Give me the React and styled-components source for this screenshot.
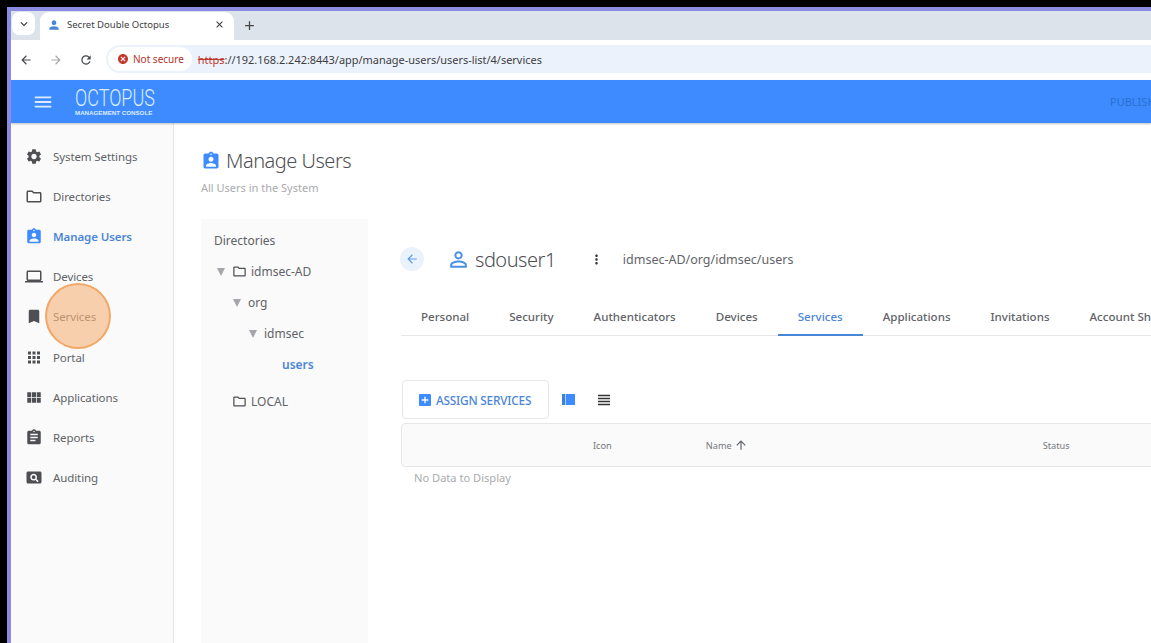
import React from "react";
import styled, { createGlobalStyle } from "styled-components";
import {
  MdSettings,
  MdOutlineFolder,
  MdAssignmentInd,
  MdOutlineLaptop,
  MdBookmark,
  MdApps,
  MdViewModule,
  MdAssignment,
  MdPageview,
  MdPersonOutline,
  MdMoreVert,
  MdArrowBack,
  MdArrowForward,
  MdArrowUpward,
  MdAddBox,
  MdCancel,
  MdRefresh,
  MdClose,
  MdAdd,
  MdKeyboardArrowDown,
  MdViewHeadline,
  MdMenu,
  MdPerson,
} from "react-icons/md";

const COLORS = {
  blue: "#3d8bff",
  link: "#4a86d8",
  text: "#5f6368",
  dark: "#4d4f53",
  muted: "#a9abae",
  panel: "#fafafa",
  line: "#e6e7e9",
};

const FONT = `"Noto Sans", "Open Sans", sans-serif`;

const GlobalStyle = createGlobalStyle`
  html, body {
    margin: 0;
    height: 100%;
    overflow: hidden;
    background: #000;
  }
  #root {
    height: 100%;
  }
  * {
    box-sizing: border-box;
  }
`;

const Screen = styled.div`
  height: 643px;
  width: 1151px;
  padding: 7px 0 0 7px;
  background: #000;
  font-family: ${FONT};
  overflow: hidden;
`;

const Frame = styled.div`
  height: 100%;
  display: flex;
  flex-direction: column;
  border-top: 4px solid #8b8be2;
  border-left: 4px solid #8b8be2;
  background: #fff;
  overflow: hidden;
`;

const TabStrip = styled.div`
  height: 29px;
  flex: none;
  display: flex;
  align-items: flex-end;
  background: #dde3ea;
  padding-left: 1px;
`;

const TabMenu = styled.div`
  width: 23px;
  height: 23px;
  margin-bottom: 5px;
  display: flex;
  align-items: center;
  justify-content: center;
  background: #fff;
  border-radius: 7px;
  color: #333;
  font-size: 14px;
`;

const BrowserTab = styled.div`
  width: 194px;
  height: 28px;
  margin-left: 5px;
  padding: 0 9px 3px 7px;
  display: flex;
  align-items: center;
  gap: 6px;
  background: #fff;
  border-radius: 9px 9px 0 0;
  color: #3c4043;
  font-size: 9.5px;
  white-space: nowrap;
`;

const TabTitle = styled.span`
  flex: 1;
`;

const NewTab = styled.div`
  margin: 0 0 7px 8px;
  display: flex;
  color: #444;
  font-size: 15px;
`;

const AddressBar = styled.div`
  height: 40px;
  flex: none;
  display: flex;
  align-items: center;
  background: #fff;
`;

const NavButton = styled.div`
  width: 30px;
  display: flex;
  justify-content: center;
  font-size: 14px;
  color: ${(p) => (p.$off ? "#a6a8ab" : "#45484c")};
`;

const Omnibox = styled.div`
  flex: 1;
  height: 28px;
  margin-left: 5px;
  margin-bottom: 2px;
  display: flex;
  align-items: center;
  background: #ecf2fb;
  border-radius: 14px 0 0 14px;
  font-size: 10.95px;
  color: #3c4043;
  white-space: nowrap;
`;

const SecureChip = styled.div`
  height: 24px;
  margin-left: 2px;
  padding: 0 8px 0 9px;
  display: flex;
  align-items: center;
  gap: 4px;
  background: #fff;
  border-radius: 12px;
  color: #b3322a;
  font-size: 10px;
`;

const Url = styled.span`
  margin-left: 6px;
`;

const Struck = styled.span`
  color: #c0392b;
  text-decoration: line-through;
`;

const Header = styled.header`
  height: 43px;
  flex: none;
  display: flex;
  align-items: center;
  background: ${COLORS.blue};
  box-shadow: 0 1px 2px rgba(0, 0, 0, 0.25);
  z-index: 2;
  color: #dcebff;
`;

const MenuButton = styled.div`
  flex: none;
  width: 64px;
  padding-left: 21px;
  display: flex;
  font-size: 22px;
`;

const Logo = styled.div`
  flex: none;
  width: 81px;
  display: flex;
  flex-direction: column;
  align-items: flex-start;
  gap: 1px;
`;

const LogoName = styled.div`
  font-family: Roboto, sans-serif;
  font-weight: 300;
  font-size: 24px;
  line-height: 20px;
  height: 20px;
  transform: scaleX(0.75);
  transform-origin: left center;
  white-space: nowrap;
`;

const LogoSub = styled.div`
  font-family: "Liberation Sans", sans-serif;
  font-weight: 700;
  font-size: 6.2px;
  line-height: 7px;
  white-space: nowrap;
`;

const Publish = styled.div`
  flex: none;
  margin-left: 954px;
  font-size: 11px;
  color: #2a6fd1;
  white-space: nowrap;
`;

const Body = styled.div`
  flex: 1;
  min-height: 0;
  display: flex;
`;

const Sidebar = styled.nav`
  width: 163px;
  flex: none;
  padding-top: 13px;
  background: ${COLORS.panel};
  border-right: 1px solid ${COLORS.line};
`;

const NavRow = styled.div`
  height: 40.2px;
  padding-left: 14px;
  display: flex;
  align-items: center;
  gap: 10px;
  font-size: 11.5px;
  letter-spacing: -0.1px;
  font-weight: ${(p) => (p.$active ? 600 : 400)};
  color: ${(p) => (p.$active ? COLORS.link : COLORS.text)};
`;

const NavIcon = styled.span`
  width: 18px;
  display: flex;
  justify-content: center;
  font-size: 19px;
  color: ${(p) => (p.$active ? COLORS.blue : COLORS.dark)};
`;

const Pulse = styled.div`
  position: absolute;
  left: 45px;
  top: 283px;
  width: 66px;
  height: 66px;
  border-radius: 50%;
  background: rgba(246, 178, 120, 0.6);
  border: 2px solid rgba(240, 160, 90, 0.85);
`;

const Main = styled.main`
  flex: 1;
  min-width: 0;
  padding: 24px 0 0 27px;
  display: flex;
  flex-direction: column;
`;

const PageTitle = styled.h1`
  margin: 0;
  display: flex;
  align-items: center;
  gap: 5px;
  font-size: 20px;
  line-height: 28px;
  font-weight: 300;
  letter-spacing: -0.5px;
  color: ${COLORS.dark};
  svg {
    color: ${COLORS.blue};
    font-size: 20px;
  }
`;

const PageSub = styled.p`
  margin: 5px 0 0 0;
  font-size: 11px;
  line-height: 15px;
  color: ${COLORS.muted};
`;

const Columns = styled.div`
  flex: 1;
  min-height: 0;
  margin-top: 24px;
  display: flex;
`;

const TreePanel = styled.aside`
  width: 167px;
  flex: none;
  padding: 12px 0 0 13px;
  background: ${COLORS.panel};
  font-size: 12px;
  color: ${COLORS.text};
`;

const TreeHead = styled.div`
  height: 20px;
  line-height: 20px;
  margin-bottom: 5px;
`;

const TreeRow = styled.div`
  height: ${(p) => p.$h || 31}px;
  padding-left: ${(p) => p.$indent}px;
  display: flex;
  align-items: center;
  gap: 4px;
  font-weight: ${(p) => (p.$active ? 600 : 400)};
  color: ${(p) => (p.$active ? COLORS.link : COLORS.text)};
  svg {
    font-size: 15px;
    color: ${COLORS.dark};
  }
`;

const Caret = styled.span`
  width: 0;
  height: 0;
  margin-right: 3px;
  border-left: 4px solid transparent;
  border-right: 4px solid transparent;
  border-top: 8px solid #a4a6a9;
`;

const Detail = styled.section`
  flex: 1;
  min-width: 0;
  margin-left: 33px;
  padding-top: 24px;
  display: flex;
  flex-direction: column;
`;

const UserRow = styled.div`
  height: 32px;
  display: flex;
  align-items: center;
  white-space: nowrap;
`;

const BackButton = styled.div`
  width: 24px;
  height: 24px;
  margin-left: -1px;
  display: flex;
  align-items: center;
  justify-content: center;
  border-radius: 50%;
  background: #eaf2fc;
  color: #5f9ae8;
  font-size: 14px;
`;

const UserName = styled.div`
  margin-left: 22px;
  display: flex;
  align-items: center;
  gap: 4px;
  font-size: 20px;
  font-weight: 300;
  letter-spacing: -0.5px;
  color: ${COLORS.dark};
  svg {
    font-size: 25px;
    color: #4a90e2;
  }
`;

const MoreButton = styled.div`
  margin-left: 33px;
  display: flex;
  font-size: 15px;
  color: #333;
`;

const UserPath = styled.div`
  margin-left: 19px;
  font-size: 12.5px;
  color: ${COLORS.text};
`;

const Tabs = styled.div`
  height: 45px;
  margin-top: 16px;
  display: flex;
  border-bottom: 1px solid ${COLORS.line};
  white-space: nowrap;
`;

const DetailTab = styled.div`
  flex: none;
  padding: 8px 20px 0;
  display: flex;
  align-items: center;
  font-size: 11.55px;
  font-weight: 500;
  margin-bottom: -1px;
  color: ${(p) => (p.$active ? COLORS.link : COLORS.text)};
  border-bottom: 2px solid ${(p) => (p.$active ? COLORS.link : "transparent")};
`;

const Toolbar = styled.div`
  margin-top: 44px;
  display: flex;
  align-items: center;
`;

const AssignButton = styled.button`
  width: 147px;
  height: 39px;
  margin-left: 1px;
  padding: 0 0 0 14px;
  display: flex;
  align-items: center;
  gap: 3px;
  background: #fff;
  border: 1px solid ${COLORS.line};
  border-radius: 4px;
  font-family: ${FONT};
  font-size: 11.8px;
  font-weight: 500;
  letter-spacing: -0.2px;
  color: ${COLORS.link};
  svg {
    font-size: 16px;
    color: ${COLORS.blue};
  }
`;

const ViewToggle = styled.div`
  margin-left: ${(p) => p.$gap}px;
  display: flex;
  font-size: 18px;
  color: #333;
`;

const TableHead = styled.div`
  height: 44px;
  margin-top: 4px;
  margin-right: -20px;
  display: flex;
  align-items: center;
  background: ${COLORS.panel};
  border: 1px solid ${COLORS.line};
  border-radius: 4px;
  font-size: 9.2px;
  color: #75787c;
`;

const HeadCell = styled.div`
  display: flex;
  align-items: center;
  gap: 2px;
  margin-left: ${(p) => p.$left}px;
  svg {
    font-size: 14px;
    color: #5f6368;
  }
`;

const NoData = styled.div`
  margin: 3px 0 0 13px;
  font-size: 11.1px;
  line-height: 16px;
  color: ${COLORS.muted};
`;

const NAV_ITEMS = [
  { label: "System Settings", icon: MdSettings },
  { label: "Directories", icon: MdOutlineFolder },
  { label: "Manage Users", icon: MdAssignmentInd, active: true },
  { label: "Devices", icon: MdOutlineLaptop },
  { label: "Services", icon: MdBookmark },
  { label: "Portal", icon: MdApps },
  { label: "Applications", icon: MdViewModule },
  { label: "Reports", icon: MdAssignment },
  { label: "Auditing", icon: MdPageview },
];

const DETAIL_TABS = ["Personal", "Security", "Authenticators", "Devices", "Services", "Applications", "Invitations", "Account Sharing"];

const CardViewIcon = () => (
  <svg width="13" height="11" viewBox="0 0 13 11">
    <rect x="0" y="0" width="3" height="11" fill="#3d7fe0" />
    <rect x="3.6" y="0" width="9.4" height="11" fill="#3d8bff" />
  </svg>
);

const App = () => {
  return (
    <Screen>
      <GlobalStyle />
      <Frame>
        <TabStrip>
          <TabMenu>
            <MdKeyboardArrowDown />
          </TabMenu>
          <BrowserTab>
            <MdPerson size={14} color="#4a86d8" />
            <TabTitle>Secret Double Octopus</TabTitle>
            <MdClose size={11} color="#333" />
          </BrowserTab>
          <NewTab>
            <MdAdd />
          </NewTab>
        </TabStrip>
        <AddressBar>
          <NavButton>
            <MdArrowBack />
          </NavButton>
          <NavButton $off>
            <MdArrowForward />
          </NavButton>
          <NavButton>
            <MdRefresh />
          </NavButton>
          <Omnibox>
            <SecureChip>
              <MdCancel size={12} color="#c5372c" />
              Not secure
            </SecureChip>
            <Url>
              <Struck>https</Struck>://192.168.2.242:8443/app/manage-users/users-list/4/services
            </Url>
          </Omnibox>
        </AddressBar>
        <Header>
          <MenuButton>
            <MdMenu />
          </MenuButton>
          <Logo>
            <LogoName>OCTOPUS</LogoName>
            <LogoSub>MANAGEMENT CONSOLE</LogoSub>
          </Logo>
          <Publish>PUBLISH</Publish>
        </Header>
        <Body>
          <Sidebar>
            {NAV_ITEMS.map(({ label, icon: Icon, active }) => (
              <NavRow key={label} $active={active}>
                <NavIcon $active={active}>
                  <Icon />
                </NavIcon>
                {label}
              </NavRow>
            ))}
          </Sidebar>
          <Main>
            <PageTitle>
              <MdAssignmentInd />
              Manage Users
            </PageTitle>
            <PageSub>All Users in the System</PageSub>
            <Columns>
              <TreePanel>
                <TreeHead>Directories</TreeHead>
                <TreeRow $indent={3}>
                  <Caret />
                  <MdOutlineFolder />
                  idmsec-AD
                </TreeRow>
                <TreeRow $indent={19}>
                  <Caret />
                  org
                </TreeRow>
                <TreeRow $indent={35}>
                  <Caret />
                  idmsec
                </TreeRow>
                <TreeRow $indent={68} $active>
                  users
                </TreeRow>
                <TreeRow $indent={18} $h={43}>
                  <MdOutlineFolder />
                  LOCAL
                </TreeRow>
              </TreePanel>
              <Detail>
                <UserRow>
                  <BackButton>
                    <MdArrowBack />
                  </BackButton>
                  <UserName>
                    <MdPersonOutline />
                    sdouser1
                  </UserName>
                  <MoreButton>
                    <MdMoreVert />
                  </MoreButton>
                  <UserPath>idmsec-AD/org/idmsec/users</UserPath>
                </UserRow>
                <Tabs>
                  {DETAIL_TABS.map((tab) => (
                    <DetailTab key={tab} $active={tab === "Services"}>
                      {tab}
                    </DetailTab>
                  ))}
                </Tabs>
                <Toolbar>
                  <AssignButton>
                    <MdAddBox />
                    ASSIGN SERVICES
                  </AssignButton>
                  <ViewToggle $gap={13}>
                    <CardViewIcon />
                  </ViewToggle>
                  <ViewToggle $gap={20}>
                    <MdViewHeadline />
                  </ViewToggle>
                </Toolbar>
                <TableHead>
                  <HeadCell $left={191}>Icon</HeadCell>
                  <HeadCell $left={94}>
                    Name
                    <MdArrowUpward />
                  </HeadCell>
                  <HeadCell $left={295}>Status</HeadCell>
                </TableHead>
                <NoData>No Data to Display</NoData>
              </Detail>
            </Columns>
          </Main>
        </Body>
      </Frame>
      <Pulse />
    </Screen>
  );
};

export default App;
